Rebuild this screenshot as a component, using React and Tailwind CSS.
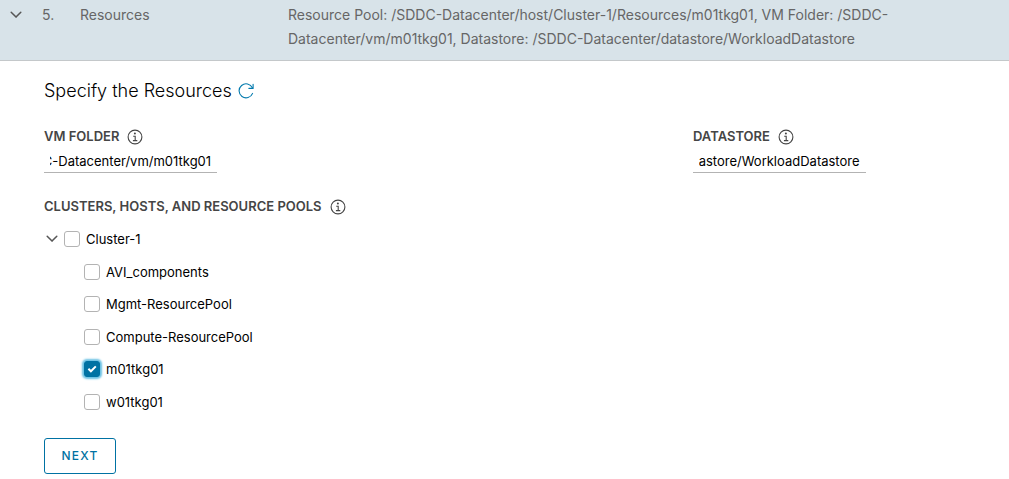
import { useEffect, useRef, useState } from "react";

function Chevron() {
  return (
    <svg viewBox="0 0 12 8" className="h-2 w-3 shrink-0" fill="none" stroke="#565656" strokeWidth="1.5" strokeLinecap="round" strokeLinejoin="round" aria-hidden="true">
      <path d="M1.2 1.2 6 6.1l4.8-4.9" />
    </svg>
  );
}

function InfoIcon() {
  return (
    <svg viewBox="0 0 16 16" className="h-4 w-4 shrink-0" fill="none" stroke="#454545" aria-hidden="true">
      <circle cx="8" cy="8" r="6.9" strokeWidth="1.1" />
      <circle cx="7.9" cy="4.6" r="1" fill="#454545" stroke="none" />
      <path d="M6.2 7.2h2v4.4M5.9 11.6h4.4" strokeWidth="1.1" />
    </svg>
  );
}

function RefreshIcon() {
  return (
    <svg viewBox="0 0 16 16" className="h-4 w-4" fill="none" stroke="#0079ad" strokeWidth="1.1" strokeLinecap="round" strokeLinejoin="round" aria-hidden="true">
      <path d="M14.6 10.4A7 7 0 1 1 14.4 4.8" />
      <path d="M15.1 1.2v4.2h-4.2" />
    </svg>
  );
}

function PathField({ id, label, path }) {
  const input = useRef(null);
  useEffect(() => {
    input.current.scrollLeft = input.current.scrollWidth;
  }, []);
  return (
    <div>
      <div className="flex h-6 items-center gap-2">
        <label htmlFor={id} className="text-[13px] font-semibold text-[#454545]">{label}</label>
        <InfoIcon />
      </div>
      <div className="w-[173px] border-b border-[#b3b3b3] px-[6px]">
        <input ref={input} id={id} type="text" defaultValue={path} className="block h-[23px] w-full bg-transparent text-[13px] text-black outline-none" />
      </div>
    </div>
  );
}

function CheckRow({ name, checked, onChange }) {
  return (
    <label className="flex items-center gap-[6px] text-[13px] leading-6 text-black">
      <span className="grid h-4 w-4 place-items-center">
        <input
          type="checkbox"
          checked={checked}
          onChange={onChange}
          className="col-start-1 row-start-1 h-4 w-4 appearance-none rounded-[3px] border border-[#b3b3b3] bg-white checked:border-[#0072a3] checked:bg-[#0072a3] checked:shadow-[0_0_2px_2px_#6bc1e3]"
        />
        {checked && (
          <svg viewBox="0 0 16 16" className="pointer-events-none col-start-1 row-start-1 h-4 w-4" fill="none" stroke="white" strokeWidth="2" aria-hidden="true">
            <path d="m4.4 7.8 2.5 2.5 4.9-4.9" />
          </svg>
        )}
      </span>
      {name}
    </label>
  );
}

const pools = ["AVI_components", "Mgmt-ResourcePool", "Compute-ResourcePool", "m01tkg01", "w01tkg01"];

export default function App() {
  const [selected, setSelected] = useState(["m01tkg01"]);
  const toggle = (name) =>
    setSelected((list) => (list.includes(name) ? list.filter((n) => n !== name) : [...list, name]));

  return (
    <main className="bg-white font-['Inter','Open_Sans',sans-serif]">
      <header className="flex border-b border-[#c4c8ca] bg-[#d8e3e9] pt-[3px] pb-[9px] text-[14px] leading-6 text-[#666666]">
        <button type="button" aria-label="Collapse step" className="flex h-6 w-8 shrink-0 items-center justify-center">
          <Chevron />
        </button>
        <span className="w-12 shrink-0 pl-[10px]">5.</span>
        <span className="w-[208px] shrink-0">Resources</span>
        <p className="max-w-[650px] flex-1">
          Resource Pool: /SDDC-Datacenter/host/Cluster-1/Resources/m01tkg01, VM Folder: /SDDC-Datacenter/vm/m01tkg01, Datastore: /SDDC-Datacenter/datastore/WorkloadDatastore
        </p>
      </header>

      <section className="px-11 pt-[18px]">
        <div className="flex items-center gap-[6px]">
          <h1 className="text-[18px] leading-6 font-light text-black">Specify the Resources</h1>
          <button type="button" aria-label="Refresh resources">
            <RefreshIcon />
          </button>
        </div>

        <div className="mt-[22px] grid grid-cols-[649px_1fr]">
          <PathField id="vm-folder" label="VM FOLDER" path="/SDDC-Datacenter/vm/m01tkg01" />
          <PathField id="datastore" label="DATASTORE" path="/SDDC-Datacenter/datastore/WorkloadDatastore" />
        </div>

        <div className="mt-[22px] flex h-6 items-center gap-2">
          <h2 className="text-[13px] font-semibold text-[#454545]">CLUSTERS, HOSTS, AND RESOURCE POOLS</h2>
          <InfoIcon />
        </div>

        <div className="mt-1 grid min-h-[195px] auto-rows-fr">
          <div className="flex items-center">
            <button type="button" aria-label="Collapse Cluster-1" className="flex h-5 w-5 items-center pl-[2px]">
              <Chevron />
            </button>
            <CheckRow name="Cluster-1" checked={selected.includes("Cluster-1")} onChange={() => toggle("Cluster-1")} />
          </div>
          {pools.map((name) => (
            <div key={name} className="flex items-center pl-10">
              <CheckRow name={name} checked={selected.includes(name)} onChange={() => toggle(name)} />
            </div>
          ))}
        </div>

        <button type="button" className="mt-5 h-9 min-w-[72px] rounded-[3px] border border-[#0072a3] px-4 text-[12px] font-medium tracking-widest text-[#0072a3]">
          NEXT
        </button>
      </section>
    </main>
  );
}
